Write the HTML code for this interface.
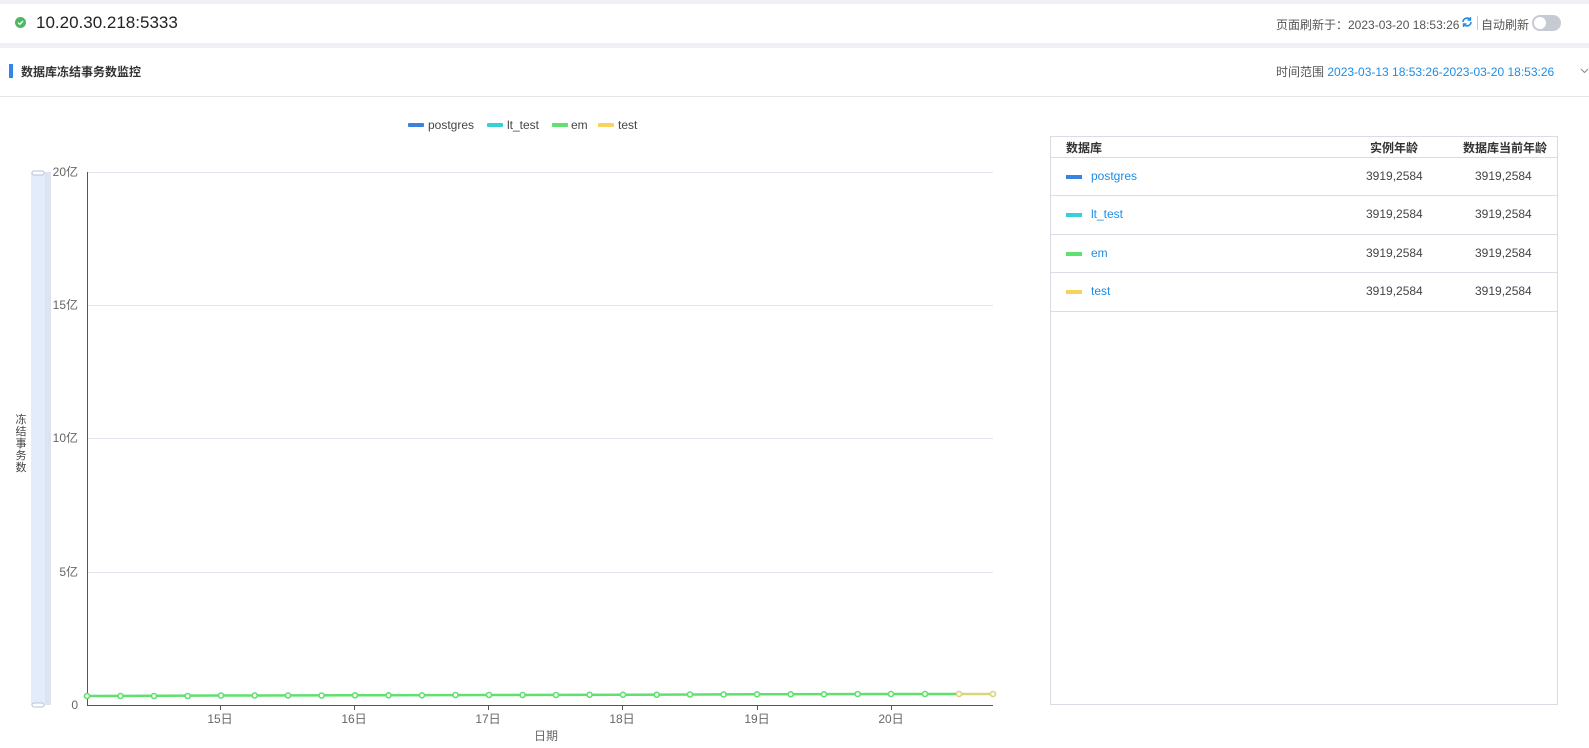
<!DOCTYPE html>
<html><head><meta charset="utf-8"><style>
*{margin:0;padding:0;box-sizing:border-box}
body{width:1589px;height:748px;overflow:hidden;background:#fff;font-family:"Liberation Sans","Noto Sans CJK SC",sans-serif;position:relative;color:#333}
.a{position:absolute;white-space:nowrap}
</style></head><body>
<div class="a" style="left:0;top:0;width:1589px;height:4px;background:#eff0f4"></div>
<div class="a" style="left:0;top:43px;width:1589px;height:5px;background:#eff0f4"></div>
<div class="a" style="left:15px;top:17px;width:11px;height:11px;border-radius:50%;background:#4cb862"></div>
<svg class="a" style="left:15px;top:17px" width="11" height="11"><path d="M3 5.6 L4.8 7.3 L8 4" stroke="#fff" stroke-width="1.4" fill="none"/></svg>
<div class="a" style="left:36px;top:13px;font-size:17px;color:#222">10.20.30.218:5333</div>
<div class="a" style="left:1276px;top:16px;font-size:12px;color:#555">页面刷新于：2023-03-20 18:53:26</div>
<svg class="a" style="left:1461px;top:16px" width="12" height="12"><path d="M2 6 A4 4 0 0 1 9 3.5 M10 6 A4 4 0 0 1 3 8.5" stroke="#1e8ce6" stroke-width="1.6" fill="none"/><path d="M9.5 1 L9.5 4 L6.5 4" stroke="#1e8ce6" stroke-width="1.4" fill="none"/><path d="M2.5 11 L2.5 8 L5.5 8" stroke="#1e8ce6" stroke-width="1.4" fill="none"/></svg>
<div class="a" style="left:1477px;top:16px;width:1px;height:14px;background:#ccc"></div>
<div class="a" style="left:1481px;top:16px;font-size:12px;color:#555">自动刷新</div>
<div class="a" style="left:1532px;top:15px;width:29px;height:16px;border-radius:8px;background:#c6cad2"></div>
<div class="a" style="left:1534px;top:17px;width:12px;height:12px;border-radius:50%;background:#fff"></div>
<div class="a" style="left:9px;top:64px;width:4px;height:14px;background:#2f86ee"></div>
<div class="a" style="left:21px;top:63px;font-size:12px;font-weight:bold;color:#333">数据库冻结事务数监控</div>
<div class="a" style="left:1276px;top:63px;font-size:12px;color:#555">时间范围 <span style="color:#1e8ce6">2023-03-13 18:53:26-2023-03-20 18:53:26</span></div>
<svg class="a" style="left:1580px;top:68px" width="9" height="6"><path d="M1 1 L4.5 4.5 L8 1" stroke="#888" fill="none"/></svg>
<div class="a" style="left:0;top:96px;width:1589px;height:1px;background:#e3e5ea"></div>

<svg class="a" style="left:0;top:100px" width="1040" height="648" font-family="Liberation Sans,Noto Sans CJK SC,sans-serif" font-size="12" fill="#666">
<g font-size="12" fill="#444">
<rect x="408" y="23" width="16" height="4" rx="1" fill="#3b82e0"/><text x="428" y="29">postgres</text>
<rect x="487" y="23" width="16" height="4" rx="1" fill="#35d0d8"/><text x="507" y="29">lt_test</text>
<rect x="552" y="23" width="16" height="4" rx="1" fill="#5fe06f"/><text x="571" y="29">em</text>
<rect x="598" y="23" width="16" height="4" rx="1" fill="#f7d35a"/><text x="618" y="29">test</text>
</g>
<g stroke="#dfe4ef"><line x1="87" y1="72.5" x2="993" y2="72.5"/><line x1="87" y1="205.5" x2="993" y2="205.5"/><line x1="87" y1="338.5" x2="993" y2="338.5"/><line x1="87" y1="472.5" x2="993" y2="472.5"/></g>
<line x1="87.5" y1="72" x2="87.5" y2="605" stroke="#555"/>
<line x1="87" y1="605.5" x2="993" y2="605.5" stroke="#555"/>
<g stroke="#555"><line x1="220.5" y1="605" x2="220.5" y2="610"/><line x1="354.5" y1="605" x2="354.5" y2="610"/><line x1="488.5" y1="605" x2="488.5" y2="610"/><line x1="622.5" y1="605" x2="622.5" y2="610"/><line x1="757.5" y1="605" x2="757.5" y2="610"/><line x1="891.5" y1="605" x2="891.5" y2="610"/></g>
<g text-anchor="end"><text x="78" y="76">20亿</text><text x="78" y="209">15亿</text><text x="78" y="342">10亿</text><text x="78" y="476">5亿</text><text x="78" y="609">0</text></g>
<g text-anchor="middle"><text x="220" y="623">15日</text><text x="354" y="623">16日</text><text x="488" y="623">17日</text><text x="622" y="623">18日</text><text x="757" y="623">19日</text><text x="891" y="623">20日</text><text x="546" y="640">日期</text></g>
<rect x="31" y="72" width="14" height="533" fill="#e3ecfa"/><rect x="45" y="72" width="6" height="533" fill="#dde3ef"/>
<rect x="32" y="71" width="12" height="4" rx="2" fill="#fff" stroke="#b8c2d2"/><rect x="32" y="603" width="12" height="4" rx="2" fill="#fff" stroke="#b8c2d2"/>
<g font-size="11" fill="#444" text-anchor="middle"><text x="21" y="323">冻</text><text x="21" y="335">结</text><text x="21" y="347">事</text><text x="21" y="359">务</text><text x="21" y="371">数</text></g>
<polyline points="87,596 221,595.5 354,595.3 488,595 622,594.8 757,594.3 891,594 959,594" stroke="#5fe06f" stroke-width="2.5" fill="none"/>
<line x1="959" y1="594" x2="993" y2="594" stroke="#d8d57a" stroke-width="2.5"/>
<g id="pts" fill="#fff" stroke="#5fe06f" stroke-width="1.6">
<circle cx="87" cy="596" r="2.5"/><circle cx="120.5" cy="596" r="2.5"/><circle cx="154" cy="596" r="2.5"/><circle cx="187.7" cy="596" r="2.5"/><circle cx="221" cy="595.5" r="2.5"/><circle cx="254.7" cy="595.5" r="2.5"/><circle cx="288" cy="595.5" r="2.5"/><circle cx="321.6" cy="595.5" r="2.5"/><circle cx="355" cy="595.3" r="2.5"/><circle cx="388.5" cy="595.3" r="2.5"/><circle cx="422" cy="595.3" r="2.5"/><circle cx="455.5" cy="595" r="2.5"/><circle cx="489" cy="595" r="2.5"/><circle cx="522.6" cy="595" r="2.5"/><circle cx="556" cy="595" r="2.5"/><circle cx="589.6" cy="594.8" r="2.5"/><circle cx="623" cy="594.8" r="2.5"/><circle cx="656.7" cy="594.8" r="2.5"/><circle cx="690" cy="594.5" r="2.5"/><circle cx="723.6" cy="594.5" r="2.5"/><circle cx="757" cy="594.3" r="2.5"/><circle cx="790.7" cy="594.3" r="2.5"/><circle cx="824" cy="594.3" r="2.5"/><circle cx="857.7" cy="594" r="2.5"/><circle cx="891" cy="594" r="2.5"/><circle cx="925" cy="594" r="2.5"/></g>
<g fill="#fff" stroke="#d8d57a" stroke-width="1.6"><circle cx="959" cy="594" r="2.5"/><circle cx="993" cy="594" r="2.5"/></g>
</svg>

<div class="a" style="left:1050px;top:136px;width:508px;height:569px;border:1px solid #d8dce4"></div>
<div class="a" style="left:1050px;top:157px;width:508px;height:1px;background:#d8dce4"></div>
<div class="a" style="left:1066px;top:139px;font-size:12px;font-weight:bold;color:#333">数据库</div>
<div class="a" style="left:1370px;top:139px;font-size:12px;font-weight:bold;color:#333">实例年龄</div>
<div class="a" style="left:1463px;top:139px;font-size:12px;font-weight:bold;color:#333">数据库当前年龄</div>

<div class="a" style="left:1050px;top:195px;width:508px;height:1px;background:#d8dce4"></div>
<div class="a" style="left:1050px;top:234px;width:508px;height:1px;background:#d8dce4"></div>
<div class="a" style="left:1050px;top:272px;width:508px;height:1px;background:#d8dce4"></div>
<div class="a" style="left:1050px;top:311px;width:508px;height:1px;background:#d8dce4"></div>

<div class="a" style="left:1066px;top:175px;width:16px;height:4px;background:#3b82e0"></div>
<div class="a" style="left:1091px;top:169px;font-size:12px;color:#1e8ce6">postgres</div>
<div class="a" style="left:1366px;top:169px;font-size:12px;color:#444">3919,2584</div>
<div class="a" style="left:1475px;top:169px;font-size:12px;color:#444">3919,2584</div>

<div class="a" style="left:1066px;top:213px;width:16px;height:4px;background:#35d0d8"></div>
<div class="a" style="left:1091px;top:207px;font-size:12px;color:#1e8ce6">lt_test</div>
<div class="a" style="left:1366px;top:207px;font-size:12px;color:#444">3919,2584</div>
<div class="a" style="left:1475px;top:207px;font-size:12px;color:#444">3919,2584</div>

<div class="a" style="left:1066px;top:252px;width:16px;height:4px;background:#5fe06f"></div>
<div class="a" style="left:1091px;top:246px;font-size:12px;color:#1e8ce6">em</div>
<div class="a" style="left:1366px;top:246px;font-size:12px;color:#444">3919,2584</div>
<div class="a" style="left:1475px;top:246px;font-size:12px;color:#444">3919,2584</div>

<div class="a" style="left:1066px;top:290px;width:16px;height:4px;background:#f7d35a"></div>
<div class="a" style="left:1091px;top:284px;font-size:12px;color:#1e8ce6">test</div>
<div class="a" style="left:1366px;top:284px;font-size:12px;color:#444">3919,2584</div>
<div class="a" style="left:1475px;top:284px;font-size:12px;color:#444">3919,2584</div>
</body></html>
